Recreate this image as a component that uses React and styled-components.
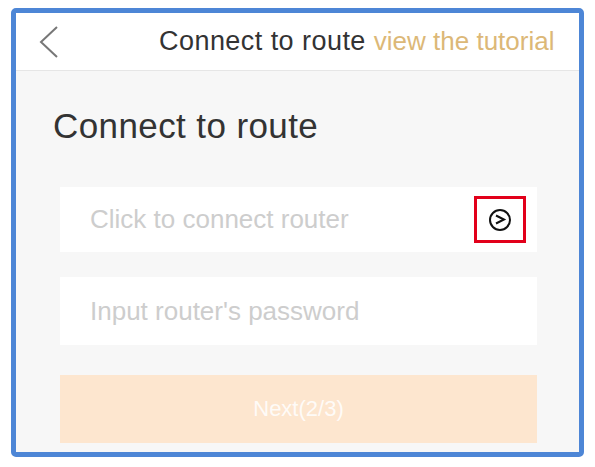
import React from "react";
import styled, { createGlobalStyle } from "styled-components";

const Global = createGlobalStyle`
  html, body {
    margin: 0;
    background: #fff;
    font-family: "Liberation Sans", Arial, sans-serif;
  }
`;

const Page = styled.div`
  padding: 8px 11px 7px;
`;

const Frame = styled.div`
  box-sizing: border-box;
  width: 573px;
  height: 449px;
  border: 5px solid #4d86d6;
  border-radius: 5px;
  background: #f7f7f7;
  overflow: hidden;
  display: flex;
  flex-direction: column;
`;

const Header = styled.header`
  height: 57px;
  flex: none;
  background: #fff;
  border-bottom: 1px solid #e6e6e6;
  display: flex;
  align-items: center;
  padding-left: 23px;
`;

const Back = styled.svg`
  width: 20px;
  height: 34px;
  margin-right: 100px;
`;

const Title = styled.h1`
  margin: 0;
  font-size: 27px;
  font-weight: 400;
  color: #333;
  letter-spacing: 0.45px;
`;

const Tutorial = styled.a`
  margin-left: 8px;
  font-size: 26px;
  color: #dcb877;
  text-decoration: none;
`;

const Body = styled.main`
  flex: 1;
  display: flex;
  flex-direction: column;
  padding: 0 42px 0 44px;
`;

const Heading = styled.h2`
  margin: 35px 0 0 -7px;
  font-size: 35px;
  line-height: 40px;
  font-weight: 400;
  color: #333;
  letter-spacing: 0.4px;
`;

const Field = styled.div`
  height: ${(p) => p.$h}px;
  margin-top: ${(p) => p.$gap}px;
  background: #fff;
  display: flex;
  align-items: center;
  justify-content: space-between;
  padding: 0 11px 0 30px;
  font-size: 26px;
  color: #cdcdcd;
`;

const Highlight = styled.span`
  box-sizing: border-box;
  width: 52px;
  height: 47px;
  border: 3px solid #e2001a;
  display: flex;
  align-items: center;
  justify-content: center;
`;

const NextButton = styled.button`
  height: 68px;
  margin-top: 30px;
  border: 0;
  background: #fde6cf;
  color: rgba(255, 255, 255, 0.85);
  font-family: inherit;
  font-size: 22px;
`;

const ArrowCircle = () => (
  <svg width="24" height="24" viewBox="0 0 24 24">
    <circle cx="12" cy="12" r="10" fill="none" stroke="#111" strokeWidth="2" />
    <path d="M8 7.5 L16 11.5 L8 15.5" fill="none" stroke="#111" strokeWidth="2" strokeLinejoin="miter" />
  </svg>
);

export default function App() {
  return (
    <>
      <Global />
      <Page>
        <Frame>
          <Header>
            <Back viewBox="0 0 20 34">
              <path d="M18 2 L2 17 L18 32" fill="none" stroke="#777" strokeWidth="2" />
            </Back>
            <Title>Connect to route</Title>
            <Tutorial>view the tutorial</Tutorial>
          </Header>
          <Body>
            <Heading>Connect to route</Heading>
            <Field $h={65} $gap={41}>
              Click to connect router
              <Highlight>
                <ArrowCircle />
              </Highlight>
            </Field>
            <Field $h={68} $gap={25}>
              Input router's password
            </Field>
            <NextButton>Next(2/3)</NextButton>
          </Body>
        </Frame>
      </Page>
    </>
  );
}
